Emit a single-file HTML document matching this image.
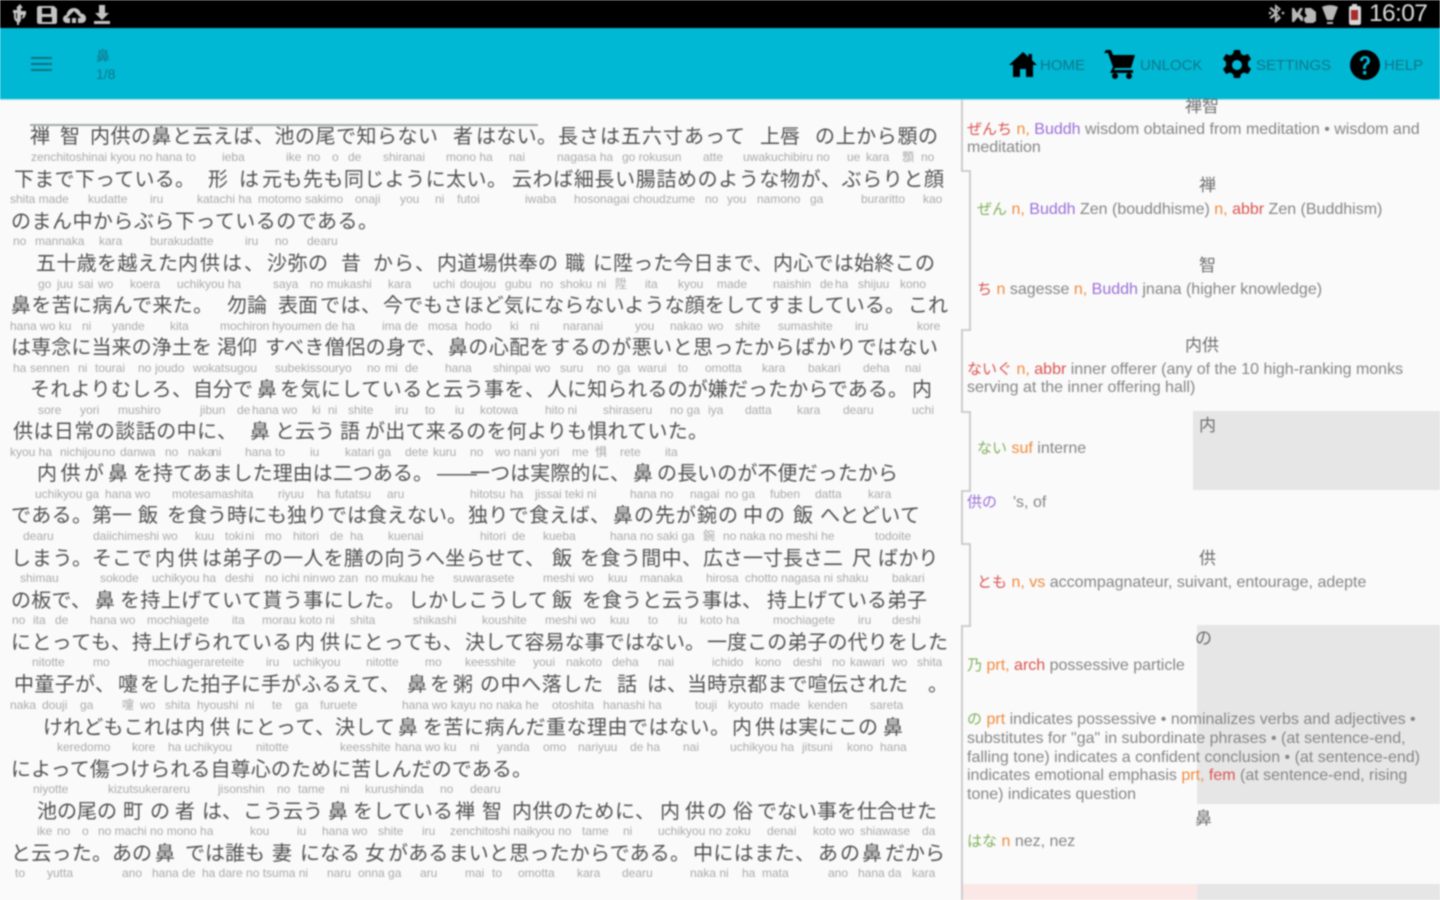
<!DOCTYPE html>
<html lang="ja"><head><meta charset="utf-8"><title>鼻</title>
<style>
html,body{margin:0;padding:0;width:1440px;height:900px;overflow:hidden;background:#fafafa}
#w{position:absolute;left:0;top:0;width:1440px;height:900px;overflow:hidden;filter:blur(.8px);font-family:"Liberation Sans","Noto Sans CJK JP",sans-serif;background:#fafafa}
.a{position:absolute}
.m{position:absolute;left:0;width:960px;height:24px;margin-top:1.5px}
.m b{position:absolute;top:0;font-weight:400;font-size:20px;line-height:24px;color:#505050;text-align:justify;text-align-last:justify;white-space:nowrap}
.r{position:absolute;left:0;width:960px;height:14px;margin-top:1px}
.r i{position:absolute;top:0;font-style:normal;font-size:12px;line-height:14px;color:#aaa;white-space:nowrap}
.t{position:absolute;white-space:nowrap;font-size:16px;line-height:18px;color:#858585;margin-top:1px}
.j{font-size:15px}
.k{position:absolute;font-size:17px;line-height:22px;color:#6e6e6e;white-space:nowrap;margin-top:1px}
.o{color:#f08a3c}.p{color:#9a6fd8}.e{color:#d9534f}.g{color:#7fb05a}
.act{position:absolute;top:57px;font-size:15px;line-height:18px;color:#0f7688;white-space:nowrap}
</style></head><body><div id="w">
<div class="a" style="left:0;top:0;width:1440px;height:28px;background:#000"></div>
<div class="a" style="left:0;top:28px;width:1440px;height:71px;background:#00b8d4"></div>
<div class="a" style="left:0;top:99px;width:1440px;height:1px;background:#9fe3ee"></div>

<svg class="a" style="left:0;top:0" width="120" height="28" viewBox="0 0 120 28">
<g fill="#c4c4c4">
<path d="M20 4l3 4h-2v11c0 2-1 3-2 4v2h-2v-3c-2-1-3-3-3-5v-4h-1v-3h4v3h-1v4c0 1 .5 2 1 2V8h-1zM21 11h5v4h-1v2l-3 2v-2l1-1v-1h-2z" />
<path fill-rule="evenodd" d="M39 6h15l3 3v13c0 1-1 2-2 2H39c-1 0-2-1-2-2V8c0-1 1-2 2-2zm3 2v6h9V8zm0 9v5h10v-5z"/>
<path fill-rule="evenodd" d="M70 23h-3c-2.500 0-4-2-4-4s1.500-4 3.500-4c.5-4 3.500-7 7.500-7s6 2.500 7 5.500c3 0 5 2.200 5 5s-2 4.500-5 4.500h-3v-5h3l-7-7-7 7h3v5zm2 0v-5h4v5z"/>
<path d="M99 5h6v8h4l-7 7-7-7h4zM94 21h16v3H94z"/>
</g></svg>

<svg class="a" style="left:1260px;top:0" width="110" height="28" viewBox="1260 0 110 28">
<g fill="#b8b8b8">
<path d="M1275 4l6 5-4 4 4 5-6 5v-7l-4 3-1.500-1.500 5-4.500-5-4.500L1271 7l4 3zM1277 8v3l1.500-1.500zM1277 15v3l1.500-1.500z"/>
<circle cx="1270" cy="13" r="1.300"/><circle cx="1283" cy="13" r="1.300"/>
<path d="M1292 8h2l3 5 3-5h3l-3 6 3 3v4h-2l-3-4-4 5h-2zM1305 8h6l5 4v9l-3 2h-7l-2-2v-3l3-2-2-3z"/>
<path d="M1322 7c5-2.500 11-2.500 16 0l-5 13h-6zM1327 22h6v2h-6z"/>
</g>
<path fill="#d8d8d8" d="M1351 6h1V4h5v2h2c1 0 2 .5 2 2v15c0 1-1 2-2 2h-8c-1 0-2-1-2-2V8c0-1.500 1-2 2-2z"/>
<rect x="1351" y="10" width="7" height="10" fill="#a82c2c"/>
</svg>
<div class="a" style="left:1369px;top:-1px;font-size:24.500px;line-height:29px;color:#dcdcdc;letter-spacing:-.6px;white-space:nowrap">16:07</div>

<div class="a" style="left:31px;top:57px;width:21px;height:2px;background:#0c6f82"></div>
<div class="a" style="left:31px;top:63px;width:21px;height:2px;background:#0c6f82"></div>
<div class="a" style="left:31px;top:69px;width:21px;height:2px;background:#0c6f82"></div>
<div class="a" style="left:96px;top:47px;font-size:14px;line-height:18px;color:#0f7688">鼻</div>
<div class="a" style="left:96px;top:65px;font-size:14px;line-height:18px;color:#0f7688">1/8</div>

<svg class="a" style="left:1000px;top:40px" width="400" height="50" viewBox="1000 40 400 50">
<path d="M1023 52l-14 13h4v12h7v-8h6v8h7V65h4l-5-4.700V54h-3.500v3z" fill="#000"/>
<path d="M1106 50h5l2 5h22l-4 13h-16l-1 2h19v3h-23l3-6-5-14h-4z" fill="#000"/>
<circle cx="1115" cy="76" r="3" fill="#000"/><circle cx="1129" cy="76" r="3" fill="#000"/>
<path fill="#000" fill-rule="evenodd" d="M1234 50h6l1 4 3 1.500 4-1.500 3 5-3 3v4l3 3-3 5-4-1.500-3 1.500-1 4h-6l-1-4-3-1.500-4 1.500-3-5 3-3v-4l-3-3 3-5 4 1.500 3-1.500zm3 10a5 5 0 1 0 0 10 5 5 0 0 0 0-10z"/>
<circle cx="1365" cy="65" r="15" fill="#000"/>
<path d="M1360 61c0-3 2-5 5-5s5 2 5 5c0 2-1 3-3 4-1 1-1 2-1 4h-3c0-3 .5-4 2-5.500 1-1 2-1.500 2-3 0-1-.5-2-2-2s-2 1-2 2.500zM1363 71h3.400v3.500H1363z" fill="#00b8d4"/>
</svg>
<div class="act" style="left:1040px">HOME</div>
<div class="act" style="left:1140px">UNLOCK</div>
<div class="act" style="left:1256px">SETTINGS</div>
<div class="act" style="left:1384px">HELP</div>

<!-- main text -->
<div class="a" style="left:30px;top:124px;width:508px;height:2px;background:#a4aaaa"></div>

<div class="m" style="top:123px"><b style="left:30px;width:20px">禅</b><b style="left:60px;width:20px">智</b><b style="left:90px;width:348px">内供の鼻と云えば、池の尾で知らない</b><b style="left:453px;width:20px">者</b><b style="left:476px;width:81px">はない。</b><b style="left:558px;width:187px">長さは五六寸あって</b><b style="left:760px;width:40px">上唇</b><b style="left:815px;width:123px">の上から顋の</b></div>
<div class="r" style="top:149px"><i style="left:31px">zenchitoshinai kyou no hana to</i><i style="left:222px">ieba</i><i style="left:286px">ike</i><i style="left:307px">no</i><i style="left:332px">o</i><i style="left:348px">de</i><i style="left:383px">shiranai</i><i style="left:446px">mono ha</i><i style="left:509px">nai</i><i style="left:557px">nagasa ha</i><i style="left:622px">go rokusun</i><i style="left:703px">atte</i><i style="left:743px">uwakuchibiru no</i><i style="left:847px">ue</i><i style="left:866px">kara</i><i style="left:902px">顋</i><i style="left:921px">no</i></div>

<div class="m" style="top:166px"><b style="left:14px;width:181px">下まで下っている。</b><b style="left:208px;width:20px">形</b><b style="left:239px;width:20px">は</b><b style="left:262px;width:245px">元も先も同じように太い。</b><b style="left:512px;width:432px">云わば細長い腸詰めのような物が、ぶらりと顔</b></div>
<div class="r" style="top:191px"><i style="left:10px">shita made</i><i style="left:88px">kudatte</i><i style="left:150px">iru</i><i style="left:197px">katachi ha</i><i style="left:258px">motomo</i><i style="left:305px">sakimo</i><i style="left:355px">onaji</i><i style="left:400px">you</i><i style="left:435px">ni</i><i style="left:457px">futoi</i><i style="left:525px">iwaba</i><i style="left:574px">hosonagai</i><i style="left:633px">choudzume</i><i style="left:705px">no</i><i style="left:727px">you</i><i style="left:757px">namono</i><i style="left:810px">ga</i><i style="left:861px">buraritto</i><i style="left:923px">kao</i></div>

<div class="m" style="top:208px"><b style="left:11px;width:367px">のまん中からぶら下っているのである。</b></div>
<div class="r" style="top:233px"><i style="left:13px">no</i><i style="left:35px">mannaka</i><i style="left:99px">kara</i><i style="left:150px">burakudatte</i><i style="left:245px">iru</i><i style="left:275px">no</i><i style="left:307px">dearu</i></div>

<div class="m" style="top:250px"><b style="left:36px;width:142px">五十歳を越えた</b><b style="left:178px;width:86px">内供は、</b><b style="left:267px;width:61px">沙弥の</b><b style="left:341px;width:20px">昔</b><b style="left:373px;width:62px">から、</b><b style="left:437px;width:121px">内道場供奉の</b><b style="left:565px;width:20px">職</b><b style="left:593px;width:180px">に陞った今日まで、</b><b style="left:773px;width:162px">内心では始終この</b></div>
<div class="r" style="top:276px"><i style="left:38px">go</i><i style="left:57px">juu</i><i style="left:78px">sai</i><i style="left:98px">wo</i><i style="left:130px">koera</i><i style="left:177px">uchikyou ha</i><i style="left:273px">saya</i><i style="left:310px">no</i><i style="left:327px">mukashi</i><i style="left:388px">kara</i><i style="left:433px">uchi</i><i style="left:460px">doujou</i><i style="left:505px">gubu</i><i style="left:540px">no</i><i style="left:560px">shoku</i><i style="left:597px">ni</i><i style="left:615px">陞</i><i style="left:645px">ita</i><i style="left:678px">kyou</i><i style="left:717px">made</i><i style="left:773px">naishin</i><i style="left:820px">de</i><i style="left:835px">ha</i><i style="left:858px">shijuu</i><i style="left:900px">kono</i></div>

<div class="m" style="top:292px"><b style="left:11px;width:202px">鼻を苦に病んで来た。</b><b style="left:227px;width:40px">勿論</b><b style="left:278px;width:40px">表面</b><b style="left:320px;width:61px">では、</b><b style="left:383px;width:522px">今でもさほど気にならないような顔をしてすましている。</b><b style="left:908px;width:40px">これ</b></div>
<div class="r" style="top:318px"><i style="left:10px">hana wo ku</i><i style="left:82px">ni</i><i style="left:112px">yande</i><i style="left:170px">kita</i><i style="left:220px">mochiron</i><i style="left:272px">hyoumen</i><i style="left:325px">de ha</i><i style="left:382px">ima de</i><i style="left:428px">mosa</i><i style="left:465px">hodo</i><i style="left:510px">ki</i><i style="left:530px">ni</i><i style="left:563px">naranai</i><i style="left:635px">you</i><i style="left:670px">nakao</i><i style="left:708px">wo</i><i style="left:735px">shite</i><i style="left:778px">sumashite</i><i style="left:855px">iru</i><i style="left:917px">kore</i></div>

<div class="m" style="top:334px"><b style="left:11px;width:201px">は専念に当来の浄土を</b><b style="left:217px;width:40px">渇仰</b><b style="left:265px;width:181px">すべき僧侶の身で、</b><b style="left:448px;width:490px">鼻の心配をするのが悪いと思ったからばかりではない</b></div>
<div class="r" style="top:360px"><i style="left:13px">ha</i><i style="left:30px">sennen</i><i style="left:78px">ni</i><i style="left:95px">tourai</i><i style="left:138px">no</i><i style="left:155px">joudo</i><i style="left:193px">wokatsugou</i><i style="left:275px">subekissouryo</i><i style="left:367px">no</i><i style="left:385px">mi</i><i style="left:405px">de</i><i style="left:445px">hana</i><i style="left:493px">shinpai</i><i style="left:535px">wo</i><i style="left:560px">suru</i><i style="left:597px">no</i><i style="left:617px">ga</i><i style="left:638px">warui</i><i style="left:678px">to</i><i style="left:705px">omotta</i><i style="left:762px">kara</i><i style="left:808px">bakari</i><i style="left:863px">deha</i><i style="left:905px">nai</i></div>

<div class="m" style="top:376px"><b style="left:30px;width:162px">それよりむしろ、</b><b style="left:193px;width:60px">自分で</b><b style="left:257px;width:20px">鼻</b><b style="left:280px;width:265px">を気にしていると云う事を、</b><b style="left:547px;width:361px">人に知られるのが嫌だったからである。</b><b style="left:912px;width:20px">内</b></div>
<div class="r" style="top:402px"><i style="left:38px">sore</i><i style="left:80px">yori</i><i style="left:118px">mushiro</i><i style="left:200px">jibun</i><i style="left:237px">de</i><i style="left:252px">hana wo</i><i style="left:312px">ki</i><i style="left:328px">ni</i><i style="left:348px">shite</i><i style="left:395px">iru</i><i style="left:425px">to</i><i style="left:455px">iu</i><i style="left:480px">kotowa</i><i style="left:545px">hito ni</i><i style="left:603px">shiraseru</i><i style="left:670px">no ga</i><i style="left:708px">iya</i><i style="left:745px">datta</i><i style="left:797px">kara</i><i style="left:843px">dearu</i><i style="left:912px">uchi</i></div>

<div class="m" style="top:418px"><b style="left:13px;width:224px">供は日常の談話の中に、</b><b style="left:250px;width:20px">鼻</b><b style="left:275px;width:60px">と云う</b><b style="left:340px;width:20px">語</b><b style="left:365px;width:343px">が出て来るのを何よりも惧れていた。</b></div>
<div class="r" style="top:444px"><i style="left:10px">kyou ha</i><i style="left:60px">nichijou</i><i style="left:102px">no</i><i style="left:120px">danwa</i><i style="left:165px">no</i><i style="left:188px">naka</i><i style="left:212px">ni</i><i style="left:245px">hana</i><i style="left:275px">to</i><i style="left:310px">iu</i><i style="left:345px">katari ga</i><i style="left:405px">dete</i><i style="left:433px">kuru</i><i style="left:470px">no</i><i style="left:495px">wo nani</i><i style="left:540px">yori</i><i style="left:572px">me</i><i style="left:595px">惧</i><i style="left:620px">rete</i><i style="left:665px">ita</i></div>

<div class="m" style="top:460px"><b style="left:37px;width:67px">内供が</b><b style="left:108px;width:20px">鼻</b><b style="left:133px;width:300px">を持てあました理由は二つある。</b><b style="left:437px;width:40px">――</b><b style="left:470px;width:160px">一つは実際的に、</b><b style="left:633px;width:20px">鼻</b><b style="left:657px;width:241px">の長いのが不便だったから</b></div>
<div class="r" style="top:486px"><i style="left:35px">uchikyou ga</i><i style="left:105px">hana wo</i><i style="left:172px">motesamashita</i><i style="left:278px">riyuu</i><i style="left:317px">ha</i><i style="left:335px">futatsu</i><i style="left:387px">aru</i><i style="left:470px">hitotsu</i><i style="left:510px">ha</i><i style="left:535px">jissai teki ni</i><i style="left:630px">hana no</i><i style="left:690px">nagai</i><i style="left:725px">no ga</i><i style="left:770px">fuben</i><i style="left:815px">datta</i><i style="left:868px">kara</i></div>

<div class="m" style="top:502px"><b style="left:11px;width:81px">である。</b><b style="left:92px;width:40px">第一</b><b style="left:138px;width:20px">飯</b><b style="left:167px;width:300px">を食う時にも独りでは食えない。</b><b style="left:468px;width:142px">独りで食えば、</b><b style="left:613px;width:125px">鼻の先が鋺の</b><b style="left:743px;width:42px">中の</b><b style="left:793px;width:20px">飯</b><b style="left:820px;width:100px">へとどいて</b></div>
<div class="r" style="top:528px"><i style="left:23px">dearu</i><i style="left:93px">daiichimeshi wo</i><i style="left:195px">kuu</i><i style="left:225px">toki</i><i style="left:245px">ni</i><i style="left:265px">mo</i><i style="left:293px">hitori</i><i style="left:330px">de</i><i style="left:350px">ha</i><i style="left:388px">kuenai</i><i style="left:480px">hitori</i><i style="left:512px">de</i><i style="left:543px">kueba</i><i style="left:610px">hana no saki ga</i><i style="left:703px">鋺</i><i style="left:723px">no naka no meshi he</i><i style="left:875px">todoite</i></div>

<div class="m" style="top:545px"><b style="left:11px;width:81px">しまう。</b><b style="left:92px;width:60px">そこで</b><b style="left:155px;width:20px">内</b><b style="left:178px;width:20px">供</b><b style="left:202px;width:343px">は弟子の一人を膳の向うへ坐らせて、</b><b style="left:552px;width:20px">飯</b><b style="left:580px;width:122px">を食う間中、</b><b style="left:703px;width:140px">広さ一寸長さ二</b><b style="left:852px;width:20px">尺</b><b style="left:878px;width:60px">ばかり</b></div>
<div class="r" style="top:570px"><i style="left:20px">shimau</i><i style="left:100px">sokode</i><i style="left:152px">uchikyou ha</i><i style="left:225px">deshi</i><i style="left:265px">no ichi nin</i><i style="left:320px">wo zan</i><i style="left:365px">no mukau he</i><i style="left:453px">suwarasete</i><i style="left:543px">meshi wo</i><i style="left:608px">kuu</i><i style="left:640px">manaka</i><i style="left:706px">hirosa</i><i style="left:745px">chotto nagasa ni shaku</i><i style="left:892px">bakari</i></div>

<div class="m" style="top:587px"><b style="left:11px;width:80px">の板で、</b><b style="left:95px;width:20px">鼻</b><b style="left:120px;width:285px">を持上げていて貰う事にした。</b><b style="left:408px;width:140px">しかしこうして</b><b style="left:552px;width:20px">飯</b><b style="left:582px;width:180px">を食うと云う事は、</b><b style="left:767px;width:160px">持上げている弟子</b></div>
<div class="r" style="top:612px"><i style="left:12px">no</i><i style="left:33px">ita</i><i style="left:55px">de</i><i style="left:90px">hana wo</i><i style="left:147px">mochiagete</i><i style="left:232px">ita</i><i style="left:262px">morau koto ni</i><i style="left:350px">shita</i><i style="left:413px">shikashi</i><i style="left:482px">koushite</i><i style="left:545px">meshi wo</i><i style="left:610px">kuu</i><i style="left:648px">to</i><i style="left:678px">iu</i><i style="left:700px">koto ha</i><i style="left:773px">mochiagete</i><i style="left:858px">iru</i><i style="left:892px">deshi</i></div>

<div class="m" style="top:629px"><b style="left:11px;width:120px">にとっても、</b><b style="left:132px;width:160px">持上げられている</b><b style="left:295px;width:20px">内</b><b style="left:320px;width:20px">供</b><b style="left:343px;width:120px">にとっても、</b><b style="left:465px;width:240px">決して容易な事ではない。</b><b style="left:707px;width:241px">一度この弟子の代りをした</b></div>
<div class="r" style="top:654px"><i style="left:32px">nitotte</i><i style="left:93px">mo</i><i style="left:148px">mochiagerareteite</i><i style="left:266px">iru</i><i style="left:293px">uchikyou</i><i style="left:366px">nitotte</i><i style="left:425px">mo</i><i style="left:465px">keesshite</i><i style="left:533px">youi</i><i style="left:566px">nakoto</i><i style="left:612px">deha</i><i style="left:658px">nai</i><i style="left:712px">ichido</i><i style="left:755px">kono</i><i style="left:793px">deshi</i><i style="left:832px">no</i><i style="left:850px">kawari</i><i style="left:892px">wo</i><i style="left:917px">shita</i></div>

<div class="m" style="top:671px"><b style="left:14px;width:101px">中童子が、</b><b style="left:118px;width:20px">嚔</b><b style="left:140px;width:260px">をした拍子に手がふるえて、</b><b style="left:407px;width:20px">鼻</b><b style="left:430px;width:20px">を</b><b style="left:453px;width:20px">粥</b><b style="left:480px;width:123px">の中へ落した</b><b style="left:617px;width:20px">話</b><b style="left:647px;width:40px">は、</b><b style="left:687px;width:221px">当時京都まで喧伝された</b><b style="left:928px;width:20px">。</b></div>
<div class="r" style="top:697px"><i style="left:10px">naka</i><i style="left:42px">douji</i><i style="left:80px">ga</i><i style="left:122px">嚔</i><i style="left:140px">wo</i><i style="left:165px">shita</i><i style="left:197px">hyoushi</i><i style="left:245px">ni</i><i style="left:272px">te</i><i style="left:295px">ga</i><i style="left:320px">furuete</i><i style="left:402px">hana wo kayu no naka he</i><i style="left:552px">otoshita</i><i style="left:603px">hanashi ha</i><i style="left:695px">touji</i><i style="left:728px">kyouto</i><i style="left:770px">made</i><i style="left:808px">kenden</i><i style="left:870px">sareta</i></div>

<div class="m" style="top:714px"><b style="left:43px;width:141px">けれどもこれは</b><b style="left:185px;width:20px">内</b><b style="left:210px;width:20px">供</b><b style="left:235px;width:100px">にとって、</b><b style="left:335px;width:60px">決して</b><b style="left:398px;width:20px">鼻</b><b style="left:423px;width:307px">を苦に病んだ重な理由ではない。</b><b style="left:732px;width:20px">内</b><b style="left:755px;width:20px">供</b><b style="left:778px;width:100px">は実にこの</b><b style="left:883px;width:20px">鼻</b></div>
<div class="r" style="top:739px"><i style="left:57px">keredomo</i><i style="left:132px">kore</i><i style="left:168px">ha uchikyou</i><i style="left:256px">nitotte</i><i style="left:340px">keesshite</i><i style="left:395px">hana wo ku</i><i style="left:470px">ni</i><i style="left:497px">yanda</i><i style="left:543px">omo</i><i style="left:578px">nariyuu</i><i style="left:630px">de ha</i><i style="left:683px">nai</i><i style="left:730px">uchikyou ha</i><i style="left:802px">jitsuni</i><i style="left:847px">kono</i><i style="left:880px">hana</i></div>

<div class="m" style="top:756px"><b style="left:11px;width:521px">によって傷つけられる自尊心のために苦しんだのである。</b></div>
<div class="r" style="top:781px"><i style="left:33px">niyotte</i><i style="left:108px">kizutsukerareru</i><i style="left:218px">jisonshin</i><i style="left:277px">no</i><i style="left:298px">tame</i><i style="left:340px">ni</i><i style="left:365px">kurushinda</i><i style="left:440px">no</i><i style="left:470px">dearu</i></div>

<div class="m" style="top:798px"><b style="left:37px;width:80px">池の尾の</b><b style="left:123px;width:20px">町</b><b style="left:150px;width:20px">の</b><b style="left:175px;width:20px">者</b><b style="left:202px;width:40px">は、</b><b style="left:243px;width:80px">こう云う</b><b style="left:328px;width:20px">鼻</b><b style="left:353px;width:100px">をしている</b><b style="left:455px;width:20px">禅</b><b style="left:482px;width:20px">智</b><b style="left:512px;width:143px">内供のために、</b><b style="left:660px;width:20px">内</b><b style="left:685px;width:20px">供</b><b style="left:707px;width:20px">の</b><b style="left:733px;width:20px">俗</b><b style="left:757px;width:180px">でない事を仕合せた</b></div>
<div class="r" style="top:823px"><i style="left:37px">ike</i><i style="left:57px">no</i><i style="left:82px">o</i><i style="left:98px">no machi no mono ha</i><i style="left:250px">kou</i><i style="left:297px">iu</i><i style="left:322px">hana wo</i><i style="left:378px">shite</i><i style="left:422px">iru</i><i style="left:450px">zenchitoshi naikyou no</i><i style="left:582px">tame</i><i style="left:623px">ni</i><i style="left:658px">uchikyou no zoku</i><i style="left:767px">denai</i><i style="left:813px">koto wo</i><i style="left:860px">shiawase</i><i style="left:922px">da</i></div>

<div class="m" style="top:840px"><b style="left:11px;width:101px">と云った。</b><b style="left:112px;width:40px">あの</b><b style="left:155px;width:20px">鼻</b><b style="left:185px;width:80px">では誰も</b><b style="left:272px;width:20px">妻</b><b style="left:300px;width:60px">になる</b><b style="left:365px;width:20px">女</b><b style="left:388px;width:302px">があるまいと思ったからである。</b><b style="left:693px;width:122px">中にはまた、</b><b style="left:818px;width:42px">あの</b><b style="left:862px;width:20px">鼻</b><b style="left:885px;width:60px">だから</b></div>
<div class="r" style="top:865px"><i style="left:15px">to</i><i style="left:47px">yutta</i><i style="left:122px">ano</i><i style="left:152px">hana de</i><i style="left:202px">ha dare no tsuma ni</i><i style="left:327px">naru</i><i style="left:358px">onna ga</i><i style="left:420px">aru</i><i style="left:465px">mai</i><i style="left:492px">to</i><i style="left:518px">omotta</i><i style="left:577px">kara</i><i style="left:622px">dearu</i><i style="left:690px">naka ni</i><i style="left:742px">ha</i><i style="left:762px">mata</i><i style="left:828px">ano</i><i style="left:858px">hana da</i><i style="left:912px">kara</i></div>

<!-- right panel -->
<div class="a" style="left:1193px;top:411px;width:247px;height:79px;background:#e6e6e6"></div>
<div class="a" style="left:1197px;top:625px;width:243px;height:179px;background:#e6e6e6"></div>
<div class="a" style="left:963px;top:884px;width:234px;height:16px;background:#fbe8e6"></div>
<div class="a" style="left:1197px;top:884px;width:243px;height:16px;background:#e6e6e6"></div>

<svg class="a" style="left:958px;top:100px" width="20" height="800" viewBox="958 100 20 800"><path d="M962 100V171h8V330h-8V412h8V491h-8V544h8V626h-8V900" fill="none" stroke="#c8c8c8" stroke-width="1.800"/></svg>

<div class="k" style="left:1185px;top:95px">禅智</div>
<div class="t" style="left:967px;top:120px"><span class="e j">ぜんち</span> <span class="o">n,</span> <span class="p">Buddh</span> wisdom obtained from meditation • wisdom and</div>
<div class="t" style="left:967px;top:138px">meditation</div>
<div class="k" style="left:1199px;top:174px">禅</div>
<div class="t" style="left:977px;top:200px"><span class="g j">ぜん</span> <span class="o">n,</span> <span class="p">Buddh</span> Zen (bouddhisme) <span class="o">n,</span> <span class="e">abbr</span> Zen (Buddhism)</div>
<div class="k" style="left:1199px;top:254px">智</div>
<div class="t" style="left:977px;top:280px"><span class="e j">ち</span> <span class="o">n</span> sagesse <span class="o">n,</span> <span class="p">Buddh</span> jnana (higher knowledge)</div>
<div class="k" style="left:1185px;top:334px">内供</div>
<div class="t" style="left:967px;top:360px"><span class="e j">ないぐ</span> <span class="o">n,</span> <span class="e">abbr</span> inner offerer (any of the 10 high-ranking monks</div>
<div class="t" style="left:967px;top:378px">serving at the inner offering hall)</div>
<div class="k" style="left:1199px;top:414px">内</div>
<div class="t" style="left:977px;top:439px"><span class="g j">ない</span> <span class="o">suf</span> interne</div>
<div class="t" style="left:967px;top:493px"><span class="p j">供の</span></div>
<div class="t" style="left:1013px;top:493px">'s, of</div>
<div class="k" style="left:1199px;top:547px">供</div>
<div class="t" style="left:977px;top:573px"><span class="e j">とも</span> <span class="o">n, vs</span> accompagnateur, suivant, entourage, adepte</div>
<div class="k" style="left:1195px;top:627px">の</div>
<div class="t" style="left:967px;top:656px"><span class="g j">乃</span> <span class="o">prt,</span> <span class="e">arch</span> possessive particle</div>
<div class="t" style="left:967px;top:710px"><span class="g j">の</span> <span class="o">prt</span> indicates possessive • nominalizes verbs and adjectives •</div>
<div class="t" style="left:967px;top:729px">substitutes for "ga" in subordinate phrases • (at sentence-end,</div>
<div class="t" style="left:967px;top:748px">falling tone) indicates a confident conclusion • (at sentence-end)</div>
<div class="t" style="left:967px;top:766px">indicates emotional emphasis <span class="o">prt,</span> <span class="e">fem</span> (at sentence-end, rising</div>
<div class="t" style="left:967px;top:785px">tone) indicates question</div>
<div class="k" style="left:1195px;top:807px">鼻</div>
<div class="t" style="left:967px;top:832px"><span class="g j">はな</span> <span class="o">n</span> nez, nez</div>
</div></body></html>
